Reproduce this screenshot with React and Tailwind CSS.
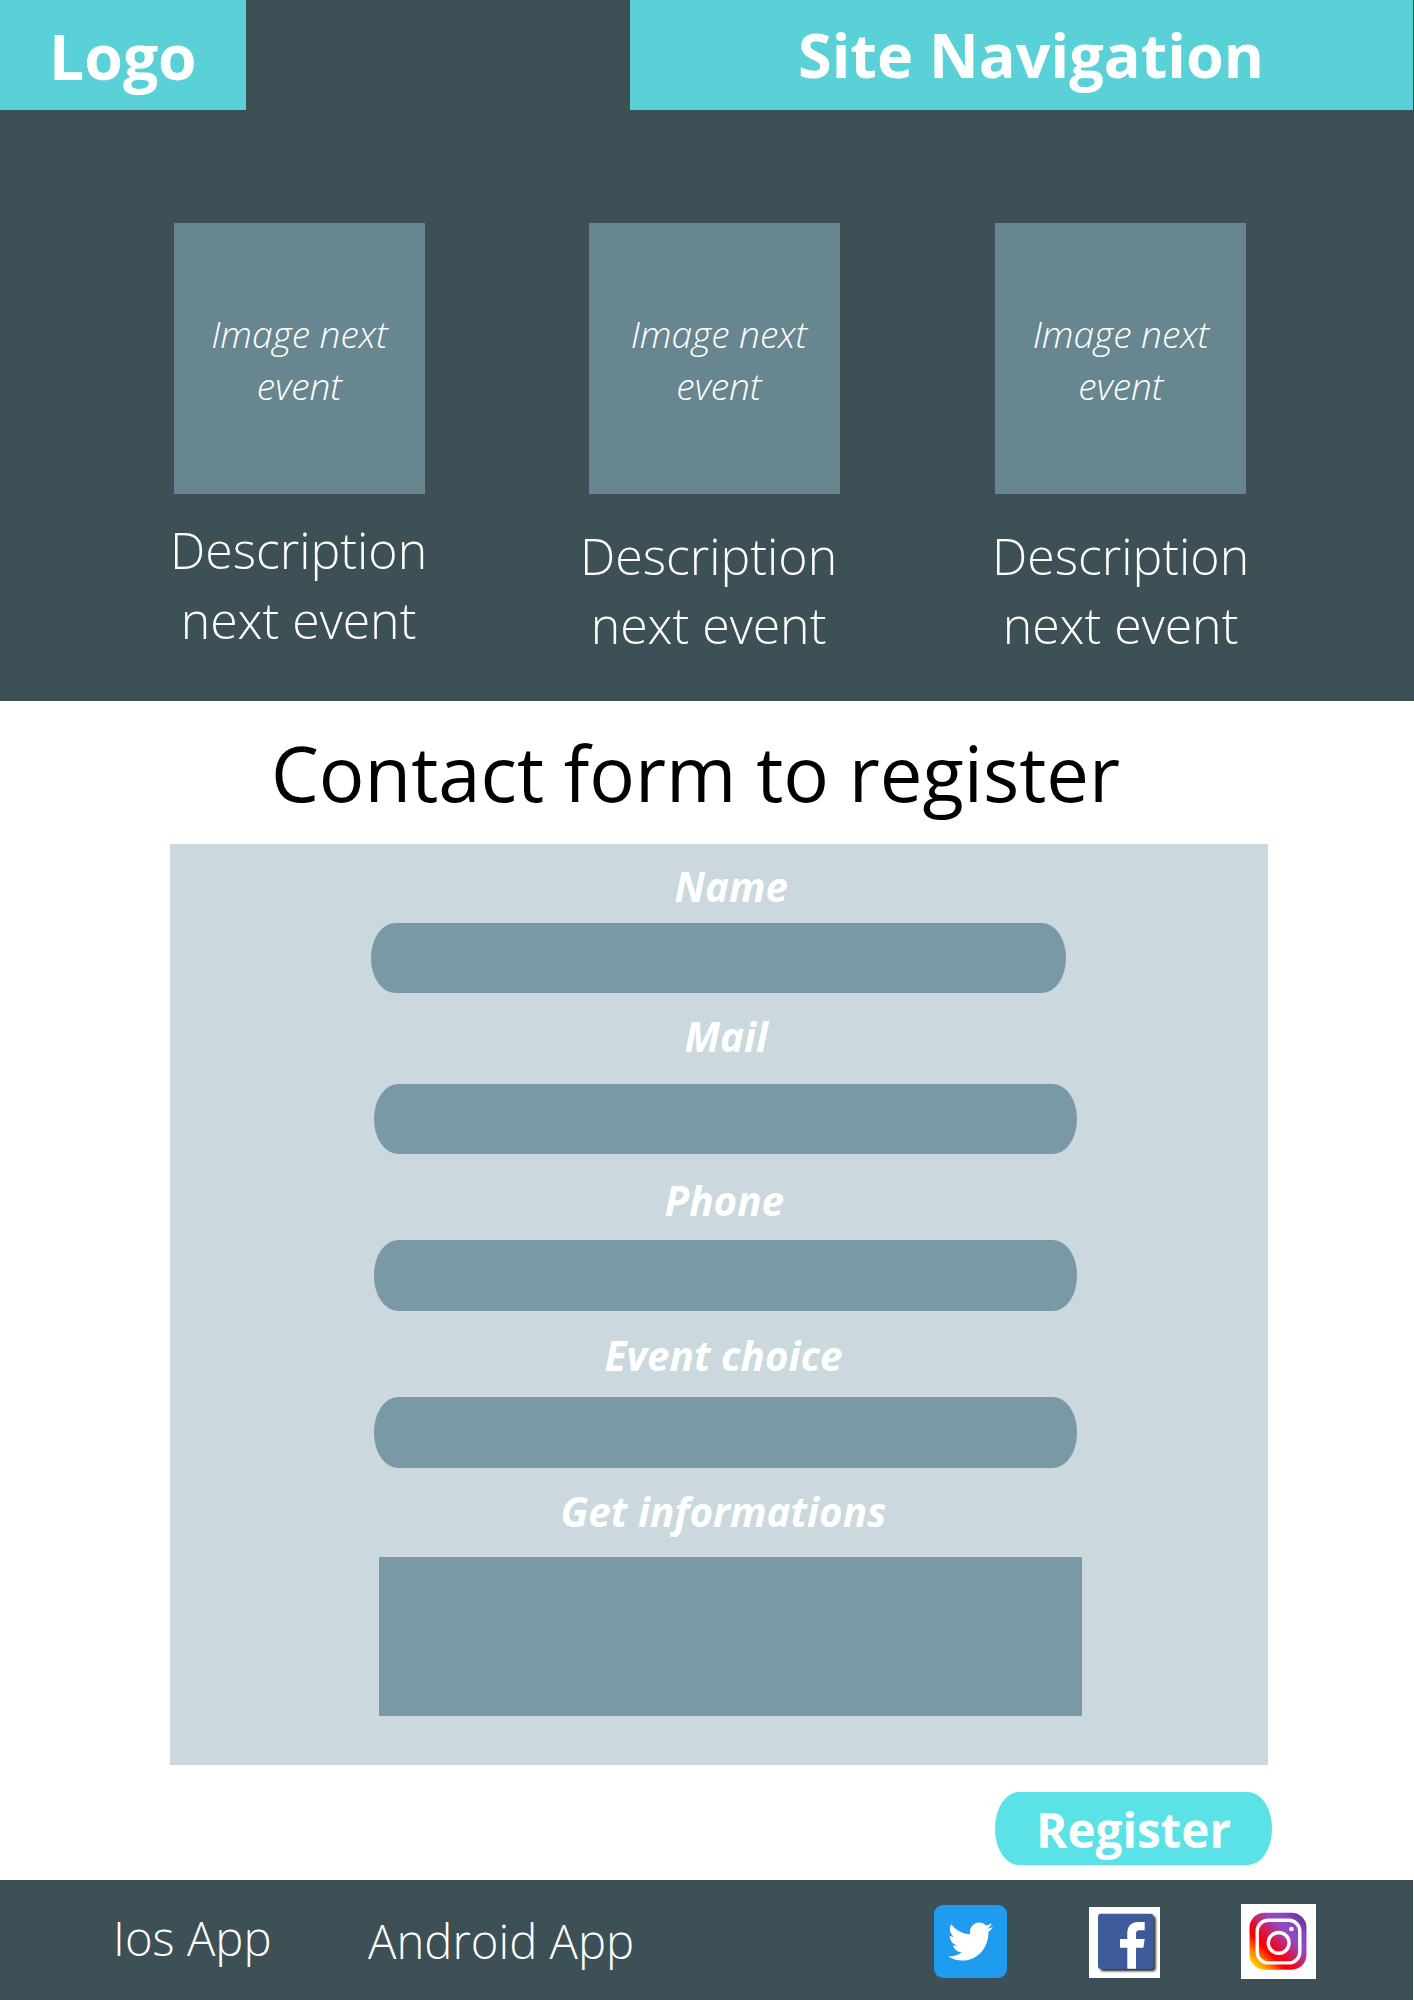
import { FaTwitter } from "react-icons/fa";

const events = [
  { card: "ml-[174px]", image: "pl-[31px]" },
  { card: "ml-[164px]", image: "pl-[40px]" },
  { card: "ml-[155px]", image: "pl-[32px]" },
];

const descriptions = [
  { box: "ml-[170px] leading-[70px]" },
  { box: "ml-[153px] pt-[7px] leading-[69px]" },
  { box: "ml-[155px] pt-[7px] leading-[69px]" },
];

const fields = [
  { label: "Name", pos: "mt-[15px] mb-[8px] ml-[504.500px]", box: "ml-[201px] h-[70px] w-[695px] rounded-[24px/35px]" },
  { label: "Mail", pos: "mt-[16px] mb-[19px] ml-[514.500px]", box: "ml-[204px] h-[70px] w-[703px] rounded-[24px/35px]" },
  { label: "Phone", pos: "mt-[19px] mb-[11px] ml-[494.500px]", box: "ml-[204px] h-[71px] w-[703px] rounded-[24px/35px]" },
  { label: "Event choice", pos: "mt-[17px] mb-[13px] ml-[434.500px]", box: "ml-[204px] h-[71px] w-[703px] rounded-[24px/35px]" },
  { label: "Get informations", pos: "mt-[16px] mb-[17px] ml-[390.500px]", box: "ml-[209px] h-[159px] w-[703px]" },
];

function FacebookIcon() {
  return (
    <svg viewBox="0 0 71 71" className="size-[71px] bg-white">
      <defs>
        <filter id="fb-shadow" x="-20%" y="-20%" width="140%" height="140%">
          <feDropShadow dx="2.2" dy="2.2" stdDeviation="1.1" floodColor="#222" floodOpacity="0.95" />
        </filter>
      </defs>
      <rect x="9" y="6.7" width="55.5" height="55.3" rx="3" fill="#3d5a99" filter="url(#fb-shadow)" />
      <path
        fill="#fff"
        d="M38.3 61.8V40.7H31V32h7.3v-5.5c0-7.500 4-11.500 11-11.500h6.400v8.300h-4.500c-3.400 0-4.200 1.200-4.200 4.200V32h8.700l-1.300 8.700H47v21.100Z"
      />
    </svg>
  );
}

function InstagramIcon() {
  return (
    <svg viewBox="0 0 75 75" className="size-[75px] bg-white">
      <defs>
        <linearGradient id="ig-fill" x1="0" y1="1" x2="1" y2="0">
          <stop offset="0.08" stopColor="#fdd900" />
          <stop offset="0.2" stopColor="#fd7a00" />
          <stop offset="0.32" stopColor="#fe0000" />
          <stop offset="0.4" stopColor="#f2041c" />
          <stop offset="0.66" stopColor="#924bc8" />
          <stop offset="0.78" stopColor="#8a45bd" />
          <stop offset="0.92" stopColor="#7233a2" />
        </linearGradient>
      </defs>
      <rect x="8.500" y="8.700" width="57" height="57" rx="15" fill="url(#ig-fill)" />
      <g fill="none" stroke="#fff" strokeWidth="3.4">
        <rect x="16.200" y="16.300" width="42.600" height="42.600" rx="11" />
        <circle cx="37.700" cy="38.900" r="10.400" />
      </g>
      <circle cx="50.400" cy="25" r="2.300" fill="#fff" />
    </svg>
  );
}

export default function App() {
  return (
    <div className="flex h-[2000px] w-[1414px] flex-col overflow-hidden bg-white font-['Open_Sans',sans-serif] text-white">
      <section className="h-[701px] bg-[#3c5056]">
        <header className="flex h-[110px] justify-between">
          <div className="w-[246px] bg-[#59d1d7] pt-[12px] pl-[49px] text-[62.4px] leading-[88px] font-bold whitespace-nowrap">
            Logo
          </div>
          <nav className="mr-px w-[783px] bg-[#59d1d7] pt-[11px] pl-[168px] text-[61.2px] leading-[88px] font-bold whitespace-nowrap">
            Site Navigation
          </nav>
        </header>
        <div className="mt-[113px] flex">
          {events.map((e, i) => (
            <div key={i} className={`h-[271px] w-[251px] bg-[#678690] pt-[85px] ${e.card}`}>
              <div className={`${e.image} w-[220px] text-center text-[37.1px] leading-[52px] font-light whitespace-nowrap italic`}>
                Image next
                <br />
                event
              </div>
            </div>
          ))}
        </div>
        <div className="mt-[21px] flex">
          {descriptions.map((d, i) => (
            <p key={i} className={`w-[257px] text-center text-[50px] font-light whitespace-nowrap ${d.box}`}>
              Description
              <br />
              next event
            </p>
          ))}
        </div>
      </section>

      <h1 className="mt-[19px] ml-[271px] h-[124px] text-[76px] leading-[105px] whitespace-nowrap text-black">
        Contact form to register
      </h1>

      <form className="ml-[170px] flex h-[921px] w-[1098px] flex-col bg-[#cbd8de]">
        {fields.map((f) => (
          <div key={f.label} className="flex flex-col">
            <label className={`text-[40.4px] leading-[56px] font-bold whitespace-nowrap italic ${f.pos}`}>{f.label}</label>
            <div className={`bg-[#7899a5] ${f.box}`} />
          </div>
        ))}
      </form>

      <button
        type="button"
        className="mt-[27px] ml-[995px] h-[73px] w-[277px] rounded-[24px/36px] bg-[#5be2e6] pt-[2px] pl-[41px] text-left text-[47.6px] leading-[72px] font-bold whitespace-nowrap"
      >
        Register
      </button>

      <footer className="mt-[15px] mr-px flex h-[120px] bg-[#3c5056] text-[47.25px] font-light whitespace-nowrap">
        <a className="ml-[113px] w-[255px] pt-[24px] leading-[67px]">Ios App</a>
        <a className="w-[566px] pt-[27px] leading-[67px]">Android App</a>
        <div className="mt-[25px] flex size-[73px] items-center justify-center rounded-[9px] bg-[#1f9bf0]">
          <FaTwitter preserveAspectRatio="none" className="h-[47px] w-[45px]" />
        </div>
        <div className="mt-[27px] ml-[82px]">
          <FacebookIcon />
        </div>
        <div className="mt-[24px] ml-[81px]">
          <InstagramIcon />
        </div>
      </footer>
    </div>
  );
}
